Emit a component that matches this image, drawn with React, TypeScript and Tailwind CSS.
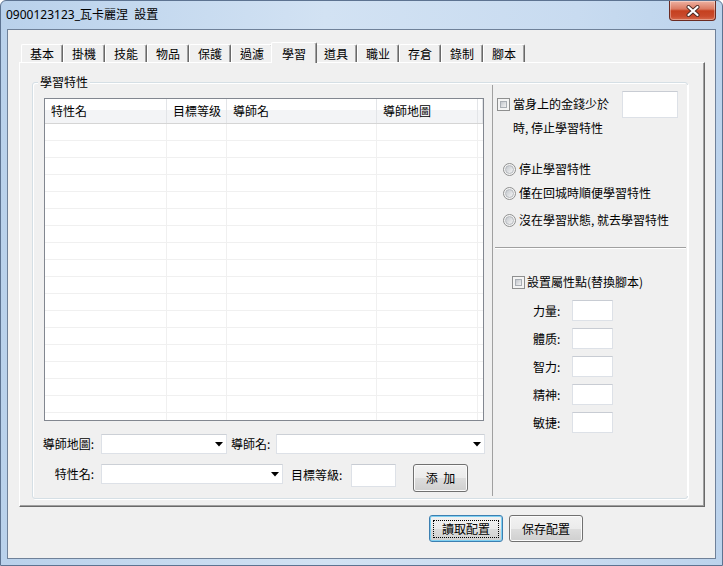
import React from "react";

const tabs = ["基本", "掛機", "技能", "物品", "保護", "過濾", "學習", "道具", "職业", "存倉", "錄制", "腳本"];
const activeTab = "學習";

const columns = [
  { label: "特性名", w: "w-[122px]" },
  { label: "目標等级", w: "w-[60px]" },
  { label: "導師名", w: "w-[150px]" },
  { label: "導師地圖", w: "w-[101px]" },
];

const attrs = ["力量:", "體质:", "智力:", "精神:", "敏捷:"];

function CloseButton() {
  return (
    <div className="mr-[6px] flex h-[20px] w-[47px] items-center justify-center rounded-b-[4px] border border-t-0 border-[#6b2b22] bg-[linear-gradient(180deg,#eeb2a2_0%,#db7a62_42%,#c5401f_52%,#c94a2c_80%,#d76a4c_100%)] shadow-[inset_0_0_0_1px_rgba(255,255,255,0.35)]">
      <svg width="14" height="12" viewBox="0 0 14 12">
        <path d="M2.5 2 L11.5 10 M11.5 2 L2.5 10" stroke="#4a2a24" strokeWidth="4" strokeLinecap="round" />
        <path d="M2.5 2 L11.5 10 M11.5 2 L2.5 10" stroke="#ffffff" strokeWidth="2.2" strokeLinecap="round" />
      </svg>
    </div>
  );
}

function TextBox({ className }: { className: string }) {
  return <div className={`border border-[#dde1e7] border-t-[#c8ccd3] bg-white ${className}`} />;
}

function Combo({ className }: { className: string }) {
  return (
    <div className={`flex items-center justify-end border border-[#dde1e7] border-t-[#ccd0d6] bg-white pr-[3px] ${className}`}>
      <svg width="8" height="5" viewBox="0 0 8 5">
        <path d="M0 0 H8 L4 4.5 Z" fill="#000" />
      </svg>
    </div>
  );
}

function CheckBox() {
  return (
    <div className="h-[13px] w-[13px] shrink-0 border border-[#8e8f8f] bg-[#f4f4f4] p-[2px]">
      <div className="h-full w-full border border-[#a9aeb4] bg-[linear-gradient(135deg,#c3c7cd,#f2f2f2)]" />
    </div>
  );
}

function Radio() {
  return (
    <div className="flex h-[13px] w-[13px] shrink-0 items-center justify-center rounded-full border border-[#8e8f8f] bg-[#f4f4f4]">
      <div className="h-[9px] w-[9px] rounded-full border border-[#b4b8bd] bg-[linear-gradient(135deg,#c4c8cd,#f5f5f5)]" />
    </div>
  );
}

function Button({ label, focused, className }: { label: string; focused?: boolean; className: string }) {
  return (
    <div
      className={`flex items-center justify-center rounded-[3px] border bg-[linear-gradient(180deg,#f2f2f2_0%,#ebebeb_50%,#dddddd_51%,#cfcfcf_100%)] ${
        focused ? "border-[#3c7fb1] shadow-[inset_0_0_0_1px_#7fd0f2]" : "border-[#707070] shadow-[inset_0_0_0_1px_#fbfbfb]"
      } ${className}`}
    >
      {focused ? (
        <div className="flex h-[18px] w-[66px] items-center justify-center border border-dotted border-black leading-[14px]">{label}</div>
      ) : (
        <span className="whitespace-pre leading-[14px]">{label}</span>
      )}
    </div>
  );
}

export default function App() {
  return (
    <div className="h-[566px] w-[723px] bg-white font-['Noto_Sans_CJK_TC','Noto_Sans',sans-serif] text-[12px] text-black">
      <div className="flex h-full w-full flex-col rounded-t-[6px] border border-[#5d7391] bg-[linear-gradient(90deg,#b9d1eb_0%,#d2e2f3_45%,#c8dbf0_80%,#bcd3ec_100%)]">
        {/* title bar */}
        <div className="flex h-[28px] shrink-0 items-start">
          <div className="mt-[6px] pl-[5px] font-['Noto_Sans','Noto_Sans_CJK_TC',sans-serif] leading-[16px] whitespace-pre">
            0900123123_瓦卡麗涅  設置
          </div>
          <div className="flex-1" />
          <CloseButton />
        </div>

        {/* client area */}
        <div className="ml-[6px] h-[530px] w-[709px] border border-[#6f8199] bg-[#f0f0f0]">
          <div className="flex flex-col pl-[11px] pt-[12px]">
            {/* tabs */}
            <div className="ml-[2px] flex h-[20px] items-end">
              {tabs.map((t) =>
                t === activeTab ? (
                  <div
                    key={t}
                    className="relative z-10 -mx-[2px] -mb-[1px] h-[21px] w-[46px] rounded-t-[2px] border-l border-t border-r border-white border-r-[#696969] bg-[#f0f0f0] pt-[2px] text-center leading-[18px] shadow-[inset_-1px_0_0_#a0a0a0]"
                  >
                    {t}
                  </div>
                ) : (
                  <div
                    key={t}
                    className="h-[18px] w-[42px] rounded-t-[2px] border-l border-t border-r border-white border-r-[#696969] bg-[#f0f0f0] text-center leading-[17px] shadow-[inset_-1px_0_0_#a0a0a0]"
                  >
                    {t}
                  </div>
                )
              )}
            </div>

            {/* tab panel */}
            <div className="h-[445px] w-[686px] border border-t-white border-l-white border-r-[#696969] border-b-[#696969] shadow-[inset_-1px_-1px_0_#a0a0a0]">
              {/* group box */}
              <div className="ml-[12px] mt-[19px] h-[417px] w-[656px] rounded-[3px] border border-[#d5dfe5] shadow-[inset_1px_1px_0_#fff,1px_1px_0_#fff]">
                <div className="-mt-[8px] ml-[5px] w-fit bg-[#f0f0f0] px-[2px] leading-[14px]">學習特性</div>
                <div className="-mt-[4px] flex h-[411px]">
                  {/* left column */}
                  <div className="ml-[7px] flex w-[445px] flex-col">
                    <div className="ml-[4px] mt-[13px] h-[323px] w-[440px] overflow-hidden border border-[#828790] bg-white">
                      <div className="flex h-[25px] border-b border-[#d5d5d5] bg-[linear-gradient(180deg,#ffffff_0%,#ffffff_45%,#f3f4f6_46%,#f3f4f6_100%)]">
                        {columns.map((c) => (
                          <div key={c.label} className={`${c.w} flex items-center border-r border-[#e3e5e8] pl-[6px] leading-[14px]`}>
                            {c.label}
                          </div>
                        ))}
                        <div className="flex-1 border-r border-[#e3e5e8]" />
                      </div>
                      {Array.from({ length: 18 }).map((_, i) => (
                        <div key={i} className="flex h-[17px] border-b border-[#f0f0f0]">
                          {columns.map((c) => (
                            <div key={c.label} className={`${c.w} border-r border-[#f0f0f0]`} />
                          ))}
                          <div className="flex-1" />
                        </div>
                      ))}
                    </div>

                    <div className="mt-[13px] flex h-[20px] items-center">
                      <div className="w-[54px] text-right leading-[14px]">導師地圖:</div>
                      <Combo className="ml-[7px] h-[20px] w-[126px]" />
                      <div className="ml-[4px] w-[41px] leading-[14px]">導師名:</div>
                      <Combo className="ml-[4px] h-[20px] w-[209px]" />
                    </div>

                    <div className="mt-[10px] flex items-start">
                      <div className="flex h-[20px] w-[54px] items-center justify-end leading-[14px]">特性名:</div>
                      <Combo className="ml-[7px] h-[20px] w-[182px]" />
                      <div className="ml-[8px] flex h-[22px] w-[54px] items-center leading-[14px]">目標等級:</div>
                      <TextBox className="ml-[6px] h-[23px] w-[45px]" />
                      <Button label="添  加" className="ml-[17px] h-[28px] w-[55px]" />
                    </div>
                  </div>

                  {/* right column */}
                  <div className="ml-[7px] flex flex-1 flex-col border-l border-[#a0a0a0] shadow-[1px_0_0_#fff]">
                    <div className="mt-[6px] flex items-start">
                      <div className="ml-[4px] mt-[7px]">
                        <CheckBox />
                      </div>
                      <div className="ml-[3px] mt-[6px] leading-[14px]">當身上的金錢少於</div>
                      <TextBox className="ml-auto mr-[9px] h-[27px] w-[56px]" />
                    </div>
                    <div className="mt-[3px] pl-[20px] leading-[14px]">時, 停止學習特性</div>

                    <div className="ml-[10px] mt-[27px] flex items-center">
                      <Radio />
                      <span className="ml-[3px] leading-[14px]">停止學習特性</span>
                    </div>
                    <div className="ml-[10px] mt-[10px] flex items-center">
                      <Radio />
                      <span className="ml-[3px] leading-[14px]">僅在回城時順便學習特性</span>
                    </div>
                    <div className="ml-[10px] mt-[13px] flex items-center">
                      <Radio />
                      <span className="ml-[3px] leading-[14px]">沒在學習狀態, 就去學習特性</span>
                    </div>

                    <div className="ml-[2px] mr-[1px] mt-[20px] border-t border-[#a0a0a0] border-b border-b-white" />

                    <div className="ml-[19px] mt-[26px] flex items-center">
                      <CheckBox />
                      <span className="ml-[2px] leading-[14px]">設置屬性點(替換腳本)</span>
                    </div>

                    <div className="mt-[11px] flex flex-col gap-[7px]">
                      {attrs.map((a) => (
                        <div key={a} className="ml-[40px] flex h-[21px] items-center">
                          <div className="w-[39px] leading-[14px]">{a}</div>
                          <TextBox className="h-[21px] w-[41px]" />
                        </div>
                      ))}
                    </div>
                  </div>
                </div>
              </div>
            </div>

            {/* bottom buttons */}
            <div className="mt-[8px] flex">
              <Button label="讀取配置" focused className="ml-[410px] h-[27px] w-[74px]" />
              <Button label="保存配置" className="ml-[6px] h-[27px] w-[74px]" />
            </div>
          </div>
        </div>
      </div>
    </div>
  );
}
